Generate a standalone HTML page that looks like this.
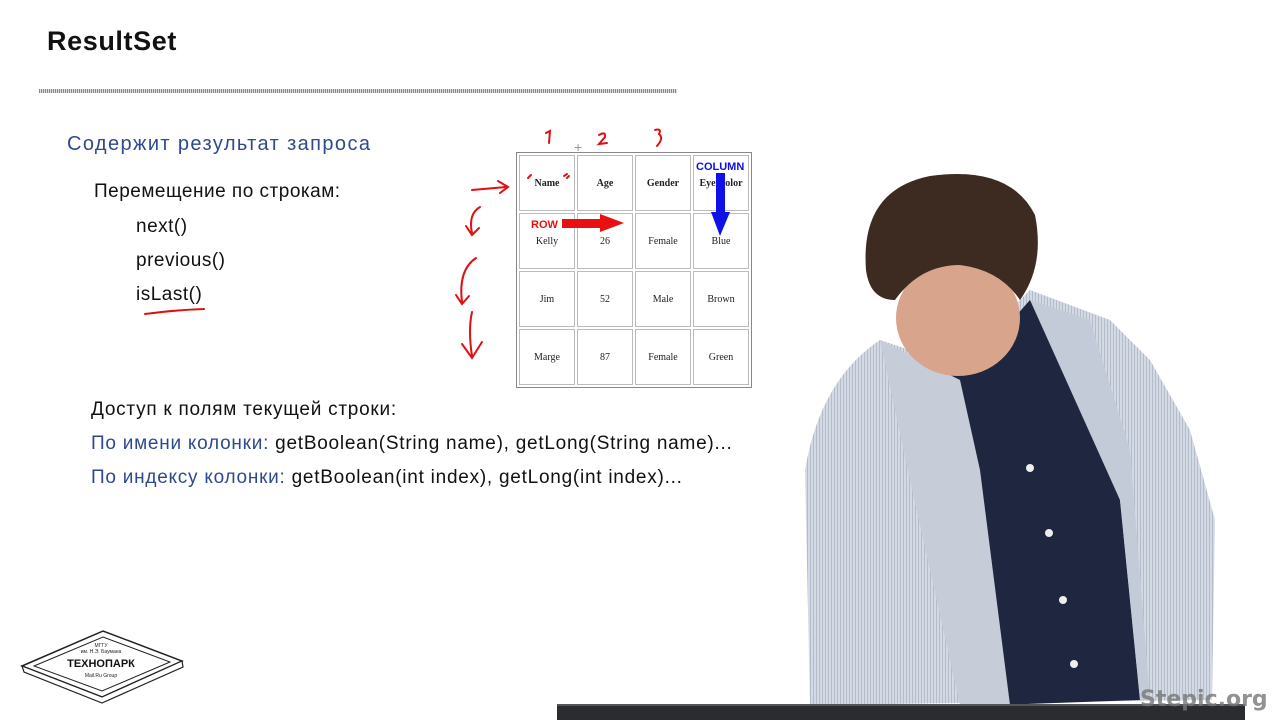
<!DOCTYPE html>
<html><head><meta charset="utf-8"><style>
html,body{margin:0;padding:0;width:1280px;height:720px;overflow:hidden;background:#fff;position:relative;font-family:"Liberation Sans","DejaVu Sans",sans-serif}
.t{position:absolute;white-space:nowrap;color:#111}
.b{color:#2e4a8e}
table{position:absolute;left:516px;top:152px;width:236px;height:236px;border-collapse:separate;border-spacing:2px;border:1px solid #888;font-family:"Liberation Serif",serif;font-size:10px;color:#222}
td{border:1px solid #bbb;text-align:center;width:54px;height:54px;padding:0}
th{border:1px solid #bbb;font-weight:bold;font-size:10px}
</style></head><body>
<div class="t" style="left:47px;top:26px;font-size:27px;font-weight:bold;letter-spacing:0.6px">ResultSet</div>
<div style="position:absolute;left:39px;top:89px;width:638px;height:4px;background:repeating-linear-gradient(90deg,#888 0 1px,#ddd 1px 2px)"></div>
<div class="t b" style="left:67px;top:133px;font-size:20px;letter-spacing:1.4px">Содержит результат запроса</div>
<div class="t" style="left:94px;top:181px;font-size:19px;letter-spacing:0.5px">Перемещение по строкам:</div>
<div class="t" style="left:136px;top:216px;font-size:19px;letter-spacing:0.5px">next()</div>
<div class="t" style="left:136px;top:250px;font-size:19px;letter-spacing:0.5px">previous()</div>
<div class="t" style="left:136px;top:284px;font-size:19px;letter-spacing:0.5px">isLast()</div>
<div class="t" style="left:91px;top:399px;font-size:19px;letter-spacing:0.75px">Доступ к полям текущей строки:</div>
<div class="t" style="left:91px;top:433px;font-size:19px;letter-spacing:0.75px"><span class="b">По имени колонки:</span> getBoolean(String name), getLong(String name)...</div>
<div class="t" style="left:91px;top:467px;font-size:19px;letter-spacing:0.75px"><span class="b">По индексу колонки:</span> getBoolean(int index), getLong(int index)...</div>

<table>
<tr><th>Name</th><th>Age</th><th>Gender</th><th>Eye Color</th></tr>
<tr><td>Kelly</td><td>26</td><td>Female</td><td>Blue</td></tr>
<tr><td>Jim</td><td>52</td><td>Male</td><td>Brown</td></tr>
<tr><td>Marge</td><td>87</td><td>Female</td><td>Green</td></tr>
</table>

<svg style="position:absolute;left:0;top:0" width="1280" height="720">
<g stroke="#e01010" stroke-width="2" fill="none" stroke-linecap="round">
<path d="M145 314 Q175 310 204 309"/>
<path d="M546 133 L550 131 L549 143"/>
<path d="M599 135 Q606 131 605 137 L599 144 L607 143"/>
<path d="M655 130 Q662 128 659 134 Q664 138 657 146"/>
<path d="M472 190 L506 187 M498 181 L508 187 L500 193"/>
<path d="M528 178 L531 175 M564 176 L567 174 M567 178 L569 176"/>
<path d="M480 207 Q468 214 472 233 M466 226 L472 235 L479 228"/>
<path d="M476 258 Q458 270 462 302 M456 295 L462 304 L469 296"/>
<path d="M472 312 Q468 330 472 356 M462 344 L472 358 L482 342"/>
</g>
<rect x="562" y="219" width="38" height="9" fill="#e81010"/>
<polygon points="600,214 624,223 600,232" fill="#e81010"/>
<text x="531" y="228" font-size="11" font-weight="bold" fill="#e81010" font-family="Liberation Sans">ROW</text>
<text x="696" y="170" font-size="11" font-weight="bold" fill="#1010e0" font-family="Liberation Sans">COLUMN</text>
<rect x="716" y="173" width="9" height="43" fill="#1010e8"/>
<polygon points="711,212 730,212 720,236" fill="#1010e8"/>
<text x="574" y="152" font-size="14" fill="#999">+</text>

<polygon points="22,666 103,631 182,661 102,697" fill="#fff" stroke="#222" stroke-width="1.5"/>
<polygon points="22,666 102,697 182,661 183,667 102,703 24,672" fill="#fff" stroke="#222" stroke-width="1.2"/>
<polygon points="34,666 103,637 170,662 102,691" fill="none" stroke="#222" stroke-width="1"/>
<text x="101" y="647" font-size="5" text-anchor="middle" fill="#222">МГТУ</text>
<text x="101" y="653" font-size="5" text-anchor="middle" fill="#222">им. Н.Э. Баумана</text>
<text x="101" y="667" font-size="11" font-weight="bold" text-anchor="middle" fill="#111">ТЕХНОПАРК</text>
<text x="101" y="677" font-size="5" text-anchor="middle" fill="#222">Mail.Ru Group</text>

<defs><pattern id="st" width="3" height="6" patternUnits="userSpaceOnUse"><rect width="3" height="6" fill="#d4dae4"/><rect width="1" height="6" fill="#b4bccb"/></pattern></defs>
<path d="M805 470 Q820 380 880 340 L940 360 L1000 320 L1030 290 L1110 320 L1150 360 L1190 430 L1215 520 L1212 700 L810 705 Z" fill="url(#st)"/>
<path d="M940 370 L990 345 L1030 300 L1050 330 L1120 500 L1140 700 L1000 705 L960 520 Z" fill="#1e2640"/>
<path d="M1030 300 L1090 320 L1130 450 L1150 700 L1140 700 L1120 500 Z" fill="#c4cbd8"/>
<path d="M880 340 L960 380 L980 470 L1010 705 L960 705 L910 480 Z" fill="#c6cdd9"/>
<ellipse cx="958" cy="318" rx="62" ry="58" fill="#d9a48c"/>
<path d="M866 270 Q860 190 930 176 Q1010 165 1035 215 Q1045 265 1020 300 Q1000 270 960 265 Q920 265 895 300 Q870 300 866 270 Z" fill="#3d2b22"/>
<circle cx="1030" cy="468" r="4" fill="#eee"/><circle cx="1049" cy="533" r="4" fill="#eee"/>
<circle cx="1063" cy="600" r="4" fill="#eee"/><circle cx="1074" cy="664" r="4" fill="#eee"/>
<rect x="557" y="704" width="688" height="16" fill="#2a2c30"/>
<rect x="557" y="704" width="688" height="2" fill="#555"/>
<text x="1140" y="706" font-size="22" font-weight="bold" fill="#777" opacity="0.8" font-family="DejaVu Sans">Stepic.org</text>
</svg>
</body></html>
